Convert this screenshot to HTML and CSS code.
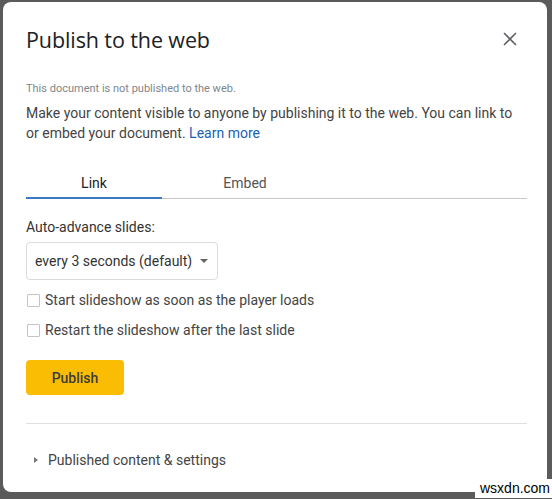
FILE: index.html
```html
<!DOCTYPE html>
<html>
<head>
  <meta charset='UTF-8'>
  <title>Publish to the web</title>
  <link rel="stylesheet" href="styles.css">
</head>
<body>
  <div class='dlg'>
    <div class='hd'>
      <h1>Publish to the web</h1>
      <button class='x' aria-label='Close'>
        <svg width='14' height='14' viewBox='0 0 14 14'><path d='M1 1L13 13M13 1L1 13' stroke='#5f6368' stroke-width='1.6' fill='none'/></svg>
      </button>
    </div>

    <div class='note'>This document is not published to the web.</div>
    <p class='desc'>Make your content visible to anyone by publishing it to the web. You can link to or embed your document. <a href='#'>Learn more</a></p>

    <div class='tabs'>
      <div class='tab on'>Link</div>
      <div class='tab'>Embed</div>
    </div>

    <div class='lbl'>Auto-advance slides:</div>
    <div class='sel'>every 3 seconds (default)<span class='caret'></span></div>

    <label class='cb'><span class='box'></span>Start slideshow as soon as the player loads</label>
    <label class='cb'><span class='box'></span>Restart the slideshow after the last slide</label>

    <button class='pub'>Publish</button>

    <div class='ft'><span class='tri'></span>Published content &amp; settings</div>
  </div>
  <div class='wm'>wsxdn.com</div>
</body>
</html>
```

FILE: styles.css
```css
html,body{margin:0;height:100%;}
body{background:#5b5b5b;font-family:Roboto,"Liberation Sans",sans-serif;color:#3c4043;position:relative;overflow:hidden;}
.dlg{position:absolute;left:3px;top:2px;width:544px;height:490px;box-sizing:border-box;background:#fff;border-radius:8px;padding:0 20px 0 23px;}
.hd{display:flex;justify-content:space-between;align-items:center;height:74px;}
h1{margin:0;font-family:"Open Sans",sans-serif;font-weight:400;font-size:21.5px;color:#202124;letter-spacing:-0.1px;}
.x{background:none;border:none;padding:0;margin-right:10px;cursor:pointer;display:flex;}
.note{font-size:11px;color:#80868b;margin-top:6px;}
.desc{margin:8px 0 0;font-size:14px;line-height:20px;color:#444;}
.desc a{color:#1a5fb4;text-decoration:none;}
.tabs{display:flex;margin-top:32px;border-bottom:1px solid #c8c8c8;}
.tab{width:136px;text-align:center;font-size:14px;color:#555;padding-bottom:6px;}
.tab.on{color:#202124;border-bottom:2px solid #3c78c8;margin-bottom:-1px;}
.tab+.tab{width:166px;}
.lbl{margin-top:20px;font-size:14px;color:#333;}
.sel{display:inline-flex;align-items:center;margin-top:7px;height:38px;box-sizing:border-box;padding:0 9px 0 8px;border:1px solid #dadce0;border-radius:4px;font-size:14px;color:#333;}
.caret{margin-left:8px;width:0;height:0;border-left:4px solid transparent;border-right:4px solid transparent;border-top:4px solid #666;}
.cb{display:flex;align-items:center;font-size:14px;color:#444;height:20px;margin-top:10px;}
.cb+.cb{margin-top:10px;}
.box{width:11px;height:11px;border:1px solid #c4c4c4;border-radius:1px;margin:0 5px 0 1px;flex:none;}
.pub{display:block;margin-top:20px;width:98px;height:35px;border:none;border-radius:4px;background:#fbbc04;color:#3c3c3c;font-family:inherit;font-size:14px;font-weight:500;cursor:pointer;}
.ft{margin-top:28px;border-top:1px solid #e0e0e0;padding-top:28px;font-size:14px;color:#444;display:flex;align-items:center;}
.tri{width:0;height:0;border-top:3.5px solid transparent;border-bottom:3.5px solid transparent;border-left:4px solid #777;margin:0 10px 0 8px;}
.wm{position:absolute;left:475px;top:479px;padding:1px 5px 2px 5px;background:#fff;font-family:"Liberation Sans",sans-serif;font-size:14px;color:#000;}
```
